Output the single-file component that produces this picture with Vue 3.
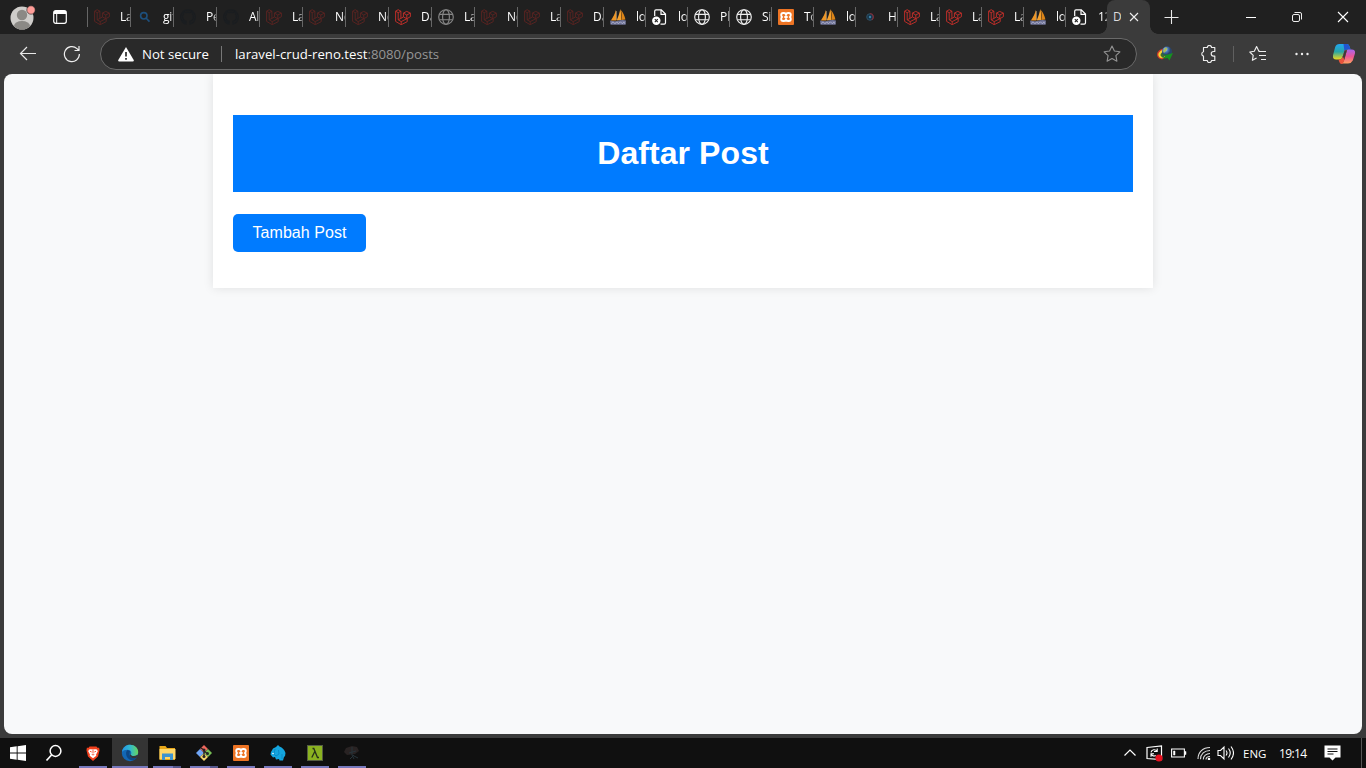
<script setup>
const dim = '#5c2421'
const red = '#c9302a'
const tabs = [
  ['laravel', 'La', dim], ['search', 'git', '#1d4f7c'], ['github', 'Pe', '#1a1d20'], ['github', 'Al', '#1a1d20'],
  ['laravel', 'La', dim], ['laravel', 'Ne', dim], ['laravel', 'Ne', dim], ['laravel', 'Da', red],
  ['globe', 'La', '#858585'], ['laravel', 'Ne', dim], ['laravel', 'La', dim], ['laravel', 'Da', dim],
  ['pma', 'loc', ''], ['doc', 'loc', '#fff'], ['globe', 'Pl', '#eee'], ['globe', 'Sir', '#eee'],
  ['xampp', 'To', ''], ['pma', 'loc', ''], ['dot', 'H', ''], ['laravel', 'La', red],
  ['laravel', 'La', red], ['laravel', 'La', red], ['pma', 'loc', ''], ['doc', '12', '#fff']
].map(([icon, text, color], i) => ({ icon, text, color, wide: i < 12 }))
</script>

<template>
  <div class="screen">
    <svg class="defs" width="0" height="0">
      <defs>
        <symbol id="laravel" viewBox="0 0 16 16">
          <path d="M.6 2.2 3.2.7l2.700 1.500v7.200l2.500-1.500V4.100l3.300-1.700 3.700 1.700v3.600l-3.200 1.800v3.200l-6 3L.6 12.400zM.6 2.200l2.600 1.500 2.700-1.500M3.200 3.700v7.100l3 1.800 6-3.100M5.900 9.400l-2.700 1.400M6.200 12.600v3.100M8.400 4.100l3.400 1.900 3.600-1.900M11.800 6v3.500M8.400 7.900l3.400 1.800" fill="none" stroke="currentColor" stroke-width=".9" />
        </symbol>
        <symbol id="search" viewBox="0 0 16 16">
          <path d="M9.200 9.200 12.500 12.600M10 6.800a3.200 3.200 0 1 1-6.400 0 3.200 3.200 0 0 1 6.400 0z" fill="none" stroke="currentColor" stroke-width="1.600" />
        </symbol>
        <symbol id="github" viewBox="0 0 16 16">
          <path d="M6 15v-2.600c-2-.5-3.400-2-3.400-4.800 0-1.200.4-2.100 1-2.800V2.500l2.400 1a8 8 0 0 1 4 0l2.400-1v2.300c.6.700 1 1.600 1 2.800 0 2.800-1.400 4.300-3.400 4.800V15a7.200 7.200 0 1 0-4 0zM6 13c-2 .5-2.600-1-3.500-1.500" fill="none" stroke="currentColor" stroke-width="1.300" />
        </symbol>
        <symbol id="globe" viewBox="0 0 16 16">
          <g fill="none" stroke="currentColor" stroke-width="1.150"><circle cx="8" cy="8" r="7.300" /><ellipse cx="8" cy="8" rx="3.400" ry="7.300" /><path d="M1.500 5.300h13M1.500 10.700h13" /></g>
        </symbol>
        <symbol id="pma" viewBox="0 0 16 16">
          <path d="M6 .8C5 5 3 8.500.9 11.500h5.300z" fill="#ef9624" />
          <path d="M10.300 0C9.500 4 8.300 8 6.600 11.500l4.600-.5C11.400 7 11.200 3 10.300 0z" fill="#f6a12d" />
          <path d="M10.800 1c1 3.500 1.100 7 .6 10l4-.5C14.800 7 13.200 3.500 10.800 1z" fill="#dc8417" />
          <path d="M6.300 2v9" stroke="#c9b08a" stroke-width=".7" />
          <path d="M0 11.500q4 1.500 8 .3t8-.3l-.4 4.300H.6z" fill="#6f7397" />
          <path d="m1 14.800 2-2 2 2 1.700-2 1.700 2 2-2 2 2 1.500-2 1 2" fill="none" stroke="#b9bbd3" stroke-width=".8" />
        </symbol>
        <symbol id="doc" viewBox="0 0 16 16">
          <path d="M2.700 7V2.200C2.700 1.400 3.200.8 4 .8h5.300l4.200 4.200v8.700c0 .8-.5 1.400-1.300 1.400H8.500M9 .8v4.500h4.500" fill="none" stroke="currentColor" stroke-width="1.200" />
          <circle cx="4.300" cy="11.700" r="4.200" fill="currentColor" />
          <path d="m2.800 10.200 3 3m0-3-3 3" stroke="#222" stroke-width="1.100" />
        </symbol>
        <symbol id="xampp" viewBox="0 0 16 16">
          <rect width="16" height="16" rx="1" fill="#ed7424" />
          <path d="M5.200 4h.6Q8 4 8 6q0-2 2.200-2h.6q2 0 2 2 0 1.500-1 2 1 .5 1 2 0 2-2 2h-.6Q8 12 8 10q0 2-2.200 2h-.6q-2 0-2-2 0-1.500 1-2-1-.5-1-2 0-2 2-2zM6.300 8h3.400" fill="none" stroke="#fff" stroke-width="1.900" stroke-linejoin="round" />
        </symbol>
        <symbol id="dot" viewBox="0 0 16 16">
          <circle cx="8" cy="8" r="3.300" fill="#17374b" stroke="#315064" /><path d="M8 4.500a3.500 3.500 0 0 1 2 6.300" fill="none" stroke="#8a2831" stroke-width="1.100" /><circle cx="8" cy="8" r="1.200" fill="#3c80a7" />
        </symbol>
      </defs>
    </svg>

    <header class="tabbar">
      <svg class="avatar" width="28" height="28" viewBox="0 0 28 28">
        <clipPath id="face"><circle cx="14" cy="13" r="11.500" /></clipPath>
        <circle cx="14" cy="13" r="11.500" fill="#cfcdca" />
        <g clip-path="url(#face)" fill="#8b8985"><circle cx="14" cy="10" r="5.200" /><ellipse cx="14" cy="21" rx="8" ry="5" /></g>
        <circle cx="23" cy="5" r="4.200" fill="#ff9d98" stroke="#202020" stroke-width=".6" />
      </svg>
      <svg class="workspace" width="14" height="14" viewBox="0 0 14 14"><rect x=".7" y=".7" width="12.600" height="12.600" rx="2" fill="none" stroke="#fff" stroke-width="1.200" /><path d="M1 1h12v3H1z" fill="#fff" /><path d="M3.700 4v9.500" stroke="#fff" /></svg>
      <nav class="tabs">
        <div v-for="(t, i) in tabs" :key="i" class="tab" :class="{ wide: t.wide }">
          <i class="sep"></i>
          <svg class="favicon" width="16" height="16" :style="{ color: t.color }"><use :href="'#' + t.icon" /></svg>
          <span class="label">{{ t.text }}</span>
        </div>
        <div class="active">
          <span>D</span>
          <svg width="10" height="10" viewBox="0 0 10 10"><path d="m1 1 8 8m0-8L1 9" stroke="#eee" stroke-width="1.100" /></svg>
        </div>
      </nav>
      <svg class="plus" width="16" height="16" viewBox="0 0 16 16"><path d="M8.500 1v14M1.500 8.500h14" stroke="#e8e8e8" stroke-width="1.100" /></svg>
      <div class="controls">
        <svg width="12" height="12" viewBox="0 0 12 12"><path d="M1 6.500h10" stroke="#fff" /></svg>
        <svg width="12" height="12" viewBox="0 0 12 12" fill="none" stroke="#eee"><rect x="1.500" y="3.500" width="7" height="7" rx="1.500" /><path d="M3.500 1.500H9A1.500 1.500 0 0 1 10.500 3v5.500" /></svg>
        <svg width="12" height="12" viewBox="0 0 12 12"><path d="m1 1 10 10m0-10L1 11" stroke="#fff" stroke-width="1.100" /></svg>
      </div>
    </header>

    <div class="toolbar">
      <svg class="back" width="18" height="16" viewBox="0 0 18 16"><path d="M17 7.500H1.500M8 1 1.500 7.500 8 14" fill="none" stroke="#e8e8e8" stroke-width="1.200" /></svg>
      <svg class="reload" width="18" height="18" viewBox="0 0 18 18"><path d="M16.400 9A7.500 7.500 0 1 1 14 3.600L16 5.500M16 1v4.500h-4.500" fill="none" stroke="#eee" stroke-width="1.200" /></svg>
      <div class="address">
        <svg width="16" height="15" viewBox="0 0 16 15"><path d="M8 0 .3 13q-.6 1.500 1 1.500h13.400q1.600 0 1-1.500z" fill="#fff" /><path d="M8 5v4.500M8 11v1.700" stroke="#292929" stroke-width="1.700" /></svg>
        <span class="secure">Not secure</span><i></i>
        <span class="url">laravel-crud-reno.test<em>:8080/posts</em></span>
        <svg class="star" width="18" height="18" viewBox="0 0 18 18"><path d="m9 1 2.400 5 5.500.8-4 3.900 1 5.500L9 13.600l-4.900 2.600 1-5.500-4-3.900 5.500-.8z" fill="none" stroke="#929292" stroke-width="1.100" stroke-linejoin="round" /></svg>
      </div>
      <div class="tools">
        <svg width="18" height="18" viewBox="0 0 18 18">
          <defs><radialGradient id="ball" cx=".35" cy=".3"><stop stop-color="#d5e6f5" /><stop offset=".5" stop-color="#4777bd" /><stop offset="1" stop-color="#29446b" /></radialGradient></defs>
          <path d="M8 3.500C4 4 1 6.500 1 9.500c0 3 3 5.500 6 4.500l4-3z" fill="#d13b29" /><path d="M8 4.500C5 5 2.300 7.500 2.300 9.700c0 2.300 2.500 4 5 3.300l3-3z" fill="#f5d333" /><path d="M7.500 6.500C6 7 4.500 8.500 4.500 10c0 1.500 1.500 2.300 3.500 2l2-3z" fill="#3d6a34" /><circle cx="11" cy="6.500" r="5" fill="url(#ball)" /><path d="M7 6 9.500 2.500l2 .5-1.500 3-2 2z" fill="#a9ba55" /><path d="M6 8.500q3 2 6 1l5-1.500-3.500 7.500-2-2.500q-3 1-6-.500 3 0 4-1.500z" fill="#16911f" />
        </svg>
        <svg width="18" height="18" viewBox="0 0 18 18"><path d="M3.500 2.500h3.800a2.100 2.100 0 0 1 4.200 0h3.300v4h-1.300a2.300 2.300 0 0 0 0 4.600h1.300v4.400h-3.300a2.100 2.100 0 0 1-4.200 0H3.500v-4.400a2.200 2.200 0 0 1 0-4.300z" fill="none" stroke="#eee" stroke-width="1.150" stroke-linejoin="round" /></svg>
        <i></i>
        <svg width="18" height="18" viewBox="0 0 18 18"><path d="M11 6.300H9.900L7.600 1.500 5.300 6.300.8 7l3.400 3.300-.8 5 4.200-2.300M11 6.500h6M10 10.500h7M12 14.500h5" fill="none" stroke="#eee" stroke-width="1.150" stroke-linejoin="round" /></svg>
        <svg width="18" height="18" viewBox="0 0 18 18" fill="#eee"><circle cx="3.500" cy="9" r="1.200" /><circle cx="9" cy="9" r="1.200" /><circle cx="14.500" cy="9" r="1.200" /></svg>
        <svg class="copilot" width="22" height="22" viewBox="0 0 22 22">
          <defs><linearGradient id="cpa" x2="0" y2="1"><stop stop-color="#22a7f3" /><stop offset=".5" stop-color="#28a5a5" /><stop offset="1" stop-color="#f0d91c" /></linearGradient><linearGradient id="cpb" x2="0" y2="1"><stop stop-color="#a765ed" /><stop offset=".5" stop-color="#ec5697" /><stop offset="1" stop-color="#ffa15f" /></linearGradient></defs>
          <path d="M6.500 1H14q2 0 2.800 3l.7 2.500H14q-2 0-2.500 2L9.500 14q-.8 2.500-3 2.500H3q-4 0-2.800-5l2-7.500Q3.200 1 6.500 1z" fill="url(#cpa)" /><path d="M10.500 1H14q2 0 2.800 3l.7 2.500H14q-2 0-2.500 2z" fill="#2255cf" /><path d="M15 6.500h4q4 0 2.800 4.500l-2 6.500Q18.700 20 15 20.500H8.500q2-1 2.700-3.500l2.300-8.500q.5-2 1.500-2z" fill="url(#cpb)" /><path d="M5.500 16.500h1q2.500 0 3.300-3l1.800-6h2.200L11.200 17q-.8 4-2.700 4-1.800 0-3-4.500z" fill="#e9543c" /><path d="m11.600 7.500-1.800 6 1.500 3 2.500-9z" fill="#3b3b3b" />
        </svg>
      </div>
    </div>

    <main class="viewport">
      <section class="page">
        <h1>Daftar Post</h1>
        <a class="add">Tambah Post</a>
      </section>
    </main>

    <footer class="taskbar">
      <div class="apps">
        <div class="app plain"><svg width="16" height="16" viewBox="0 0 16 16" fill="#fff"><path d="M0 2.300 6.700 1.300v6.200H0zM7.600 1.200 16 0v7.500H7.600zM0 8.400h6.700v6.300L0 13.700zM7.600 8.400H16V16l-8.400-1.200z" /></svg></div>
        <div class="app plain find"><svg width="18" height="18" viewBox="0 0 18 18"><circle cx="10.500" cy="7" r="5.400" fill="none" stroke="#fff" stroke-width="1.500" /><path d="m6.500 11-5 5.500" stroke="#fff" stroke-width="1.700" /></svg></div>
        <div class="app"><svg width="14" height="17" viewBox="0 0 16 18"><path d="m4 1h8l1 1.500 2-.2.5 3-1.800 7L8 17.500 2.300 12.300.500 5.300l.5-3 2 .2z" fill="#f1401d" /><path d="m3.500 4.500 2-.5 2.500.5 2.500-.5 2 .5 1 2-2 3.500.3 1.500L8 14.500l-3.800-3 .3-1.500-2-3.500z" fill="#fff" /><path d="m4.500 6.500 2 .8M11.500 6.500l-2 .8M8 5v4M6.500 9.500 8 11l1.500-1.500" stroke="#f1401d" fill="none" /></svg></div>
        <div class="app current"><svg width="18" height="18" viewBox="0 0 18 18"><defs><linearGradient id="edge"><stop stop-color="#2494e5" /><stop offset=".5" stop-color="#31b9cf" /><stop offset="1" stop-color="#68d55b" /></linearGradient></defs><circle cx="9" cy="9" r="8.200" fill="#1267b5" /><path d="M1 8C1.500 3.500 5 .8 9 .8c5 0 8.200 3.500 8.200 7.200 0 3-2 4.300-4.500 4.300-2 0-3-.8-3-1.600 0-.7.600-.9.600-2 0-1.800-1.800-3-4-3C4 5.700 2 6.500 1 8z" fill="url(#edge)" /><path d="M6.500 6C4 8 5 13.500 8.500 15.500c3 1.500 6 .3 7.500-2-3 1.200-7.500.5-7.500-3.500 0-1.500.5-2 .5-3z" fill="#0d4785" /><path d="M10.200 9c-.5 1-.4 1.300-.3 1.800.5 1.300 3.500 2 6.300.3l1 .3-.8 2c-4 1.500-7 .5-7.500-2z" fill="#333538" /></svg></div>
        <div class="app grouped"><svg width="17" height="16" viewBox="0 0 17 16"><path d="M.5 1h6l1.500 2h8v12H.5z" fill="#e8a719" /><path d="M.5 4h16v10H.5z" fill="#ffd768" /><path d="M3 15V8.500h11V15h-3v-3H6v3z" fill="#3d94d0" /></svg></div>
        <div class="app grouped"><svg width="18" height="18" viewBox="0 0 18 18"><path d="m9 1 4 4-4 4-4-4z" fill="#ee675c" /><path d="m5 5 4 4-4 4-4-4z" fill="#70a5f5" /><path d="m13 5 4 4-4 4-4-4z" fill="#78bf56" /><path d="m9 9 4 4-4 4-4-4z" fill="#f5d66c" /><path d="m6 4 3 2v7M9 7l4 3" stroke="#252525" stroke-width="1.300" fill="none" /><g fill="#252525"><circle cx="9" cy="6" r="1.500" /><circle cx="9" cy="12.500" r="1.500" /><circle cx="12.500" cy="9.500" r="1.500" /></g></svg></div>
        <div class="app"><svg width="16" height="16"><use href="#xampp" /></svg></div>
        <div class="app"><svg width="16" height="16" viewBox="0 0 16 16"><path d="M1 7 3 3.500 6 2l2-2 1.500 1.500Q14 3 15.500 8q0 3-1.500 4l-1 3.500H9.500L9 14l-3 .5L5 12l-2 .5L.5 9.500z" fill="#14a6df" /><path d="m5 4-1 5 2 2 3-2-.5-4M12 9v5" fill="none" stroke="#0d8ac5" /><circle cx="3" cy="8.500" r=".8" fill="#fff" /></svg></div>
        <div class="app"><svg width="16" height="16" viewBox="0 0 16 16"><rect x=".5" y=".5" width="15" height="15" fill="#8ab220" stroke="#555d42" /><path d="M5.500 3.500h1.300L10.500 12.500H12M7.800 6.500 4.800 12.500" stroke="#263019" stroke-width="1.300" fill="none" /></svg></div>
        <div class="app"><svg width="18" height="16" viewBox="0 0 18 16"><path d="M1 7 3 3l6-2 5 1 2 4-4 3-8 1z" fill="#292323" /><path d="m6 8 7-2M9 2v8m0 0 2 4m0-4-4 4m4-3 4 2" stroke="#27343b" fill="none" /></svg></div>
      </div>
      <div class="tray">
        <svg width="14" height="16" viewBox="0 0 14 16"><path d="m1.500 10.500 5.500-5.500 5.500 5.500" fill="none" stroke="#fff" stroke-width="1.200" /></svg>
        <svg class="sync" width="17" height="18" viewBox="0 0 17 18"><path d="M1 3.500 15.500 2v13.500L1 14.500z" fill="none" stroke="#fff" stroke-width="1.200" /><path d="M5 8.300c.5-3 4.500-3.300 6-1M11.200 4.500v3H8M5 12.700v-3h3M5.200 10c1 2 3 2.500 4.500 1.500" fill="none" stroke="#fff" stroke-width="1.100" /><circle cx="13" cy="14" r="3.600" fill="#e8111f" /></svg>
        <svg class="battery" width="16" height="10" viewBox="0 0 16 10"><path d="M.6 1h12.800v8H.6z" fill="none" stroke="#fff" stroke-width="1.100" /><path d="M14 3.500h1v3h-1M2.500 3h1.500v4H2.500z" fill="#fff" stroke="#fff" stroke-width=".5" /></svg>
        <svg class="wifi" width="14" height="14" viewBox="0 0 14 14"><path d="M1 13C1 6 6 1.500 13 1.500M3.500 13.300C3.500 8 7.500 4.500 13 4.500M6.300 13.500c0-3.500 3-6 6.700-6M9 13.500c0-1.700 1.700-3 4-3" fill="none" stroke="#ddd" stroke-width="1.100" /><circle cx="12" cy="13" r="1.300" fill="#fff" /></svg>
        <svg class="sound" width="17" height="16" viewBox="0 0 17 16"><path d="M1 5.500h2.500L7 2v12l-3.500-3.500H1zM9 5.500q2 2.500 0 5M11.500 3.500q3.500 4.500 0 9M14 1.500q5 6.500 0 13" fill="none" stroke="#fff" stroke-width="1.100" /></svg>
        <span class="lang">ENG</span>
        <span class="clock">19:14</span>
        <svg class="notice" width="17" height="16" viewBox="0 0 17 16"><path d="M.5.500h16v12h-5l-3 3-3-3h-5z" fill="#fff" /><path d="M3.500 4h10M3.500 6.500h10M3.500 9h6" stroke="#111" /></svg>
      </div>
    </footer>
  </div>
</template>

<style>
html, body { margin: 0; overflow: hidden; }
</style>
<style scoped>
.screen { width: 1366px; height: 768px; display: flex; flex-direction: column; background: #3b3b3b; color: #fff; font-family: "Open Sans", "Noto Sans", sans-serif; overflow: hidden; }
.screen svg { display: block; flex: none; }
.screen .defs { position: absolute; }
.tabbar { height: 34px; background: #202020; display: flex; align-items: center; flex: none; }
.avatar { margin: 4px 0 0 8px; }
.workspace { margin-left: 17px; }
.tabs { display: flex; height: 34px; margin-left: 20px; }
.tab { width: 42px; display: flex; align-items: center; overflow: hidden; }
.tab.wide { width: 43px; }
.sep { width: 1px; height: 20px; background: #666; flex: none; }
.favicon { margin-left: 6px; }
.label { margin-left: 10px; font-size: 12px; letter-spacing: -.3px; line-height: 16px; width: 9px; overflow: hidden; white-space: nowrap; flex: none; -webkit-mask-image: linear-gradient(90deg, #000 70%, transparent 120%); mask-image: linear-gradient(90deg, #000 70%, transparent 120%); }
.wide .label { width: 10px; }
.active { position: relative; width: 43px; box-sizing: border-box; padding: 0 11px 0 7px; display: flex; align-items: center; justify-content: space-between; background: #3b3b3b; border-radius: 8px 8px 0 0; font-size: 12px; line-height: 16px; color: #ddd; }
.active span { width: 8px; overflow: hidden; margin-left: -1px; }
.active::before, .active::after { content: ""; position: absolute; bottom: 0; width: 8px; height: 8px; }
.active::before { left: -8px; background: radial-gradient(circle at 0 0, #202020 7.5px, #3b3b3b 8px); }
.active::after { right: -8px; background: radial-gradient(circle at 100% 0, #202020 7.5px, #3b3b3b 8px); }
.plus { margin-left: 13px; }
.controls { margin-left: auto; display: flex; gap: 34px; padding-right: 17px; }
.toolbar { height: 40px; display: flex; align-items: center; flex: none; }
.back { margin-left: 19px; }
.reload { margin-left: 26px; }
.address { margin-left: 19px; width: 1037px; height: 32px; box-sizing: border-box; border: 1px solid #6a6a6a; border-radius: 16px; background: #292929; display: flex; align-items: center; padding: 0 15px 0 17px; }
.secure { margin-left: 8px; width: 68px; white-space: nowrap; font-size: 13.2px; }
.address i { width: 1px; height: 16px; background: #777; margin: 0 13px 0 11px; }
.url { font-size: 13.2px; white-space: nowrap; }
.url em { color: #969696; font-style: normal; }
.star { margin-left: auto; }
.tools { display: flex; align-items: center; margin-left: 19px; }
.tools svg + svg { margin-left: 26px; }
.tools i { width: 1px; height: 16px; background: #606060; margin: 0 15px; }
.tools svg.copilot { margin-left: 22px; }
.viewport { width: 1358px; height: 660px; margin: 0 4px 4px; border-radius: 8px; background: #f8f9fa; overflow: hidden; flex: none; font-family: "Liberation Sans", Arial, sans-serif; }
.page { width: 940px; height: 214px; box-sizing: border-box; margin: 0 auto; padding: 41px 20px 0; background: #fff; box-shadow: 0 0 10px rgba(0, 0, 0, .1); }
h1 { margin: 0 0 22px; height: 77px; line-height: 76px; background: #007bff; text-align: center; font-size: 32px; font-weight: bold; letter-spacing: .08px; }
.add { display: block; width: 133px; height: 38px; line-height: 37px; text-align: center; background: #007bff; border-radius: 5px; font-size: 16px; letter-spacing: .05px; }
.taskbar { height: 30px; background: #101010; display: flex; justify-content: space-between; flex: none; }
.apps { display: flex; gap: 1px; }
.app { width: 36px; height: 30px; display: flex; align-items: center; justify-content: center; position: relative; }
.find { width: 37px; padding-right: 0; }
.find svg { margin-right: 3px; }
.app::after { content: ""; position: absolute; left: 4px; right: 4px; bottom: 0; height: 2px; background: #7779bd; }
.plain::after { display: none; }
.current { background: #343434; }
.current::after { left: 0; right: 0; }
.grouped::after { background: linear-gradient(90deg, #7779bd 20px, #55578c 20px); }
.tray { display: flex; align-items: center; border-right: 1px solid #555; margin-right: 4px; width: 239px; box-sizing: border-box; font-size: 12px; }
.sync { margin-left: 9px; }
.battery { margin-left: 8px; }
.wifi { margin-left: 10px; }
.sound { margin-left: 6px; }
.lang { margin-left: 9px; width: 24px; font-size: 11.5px; }
.clock { margin-left: 12px; width: 28px; letter-spacing: -.6px; }
.notice { margin-left: 17px; }
</style>
